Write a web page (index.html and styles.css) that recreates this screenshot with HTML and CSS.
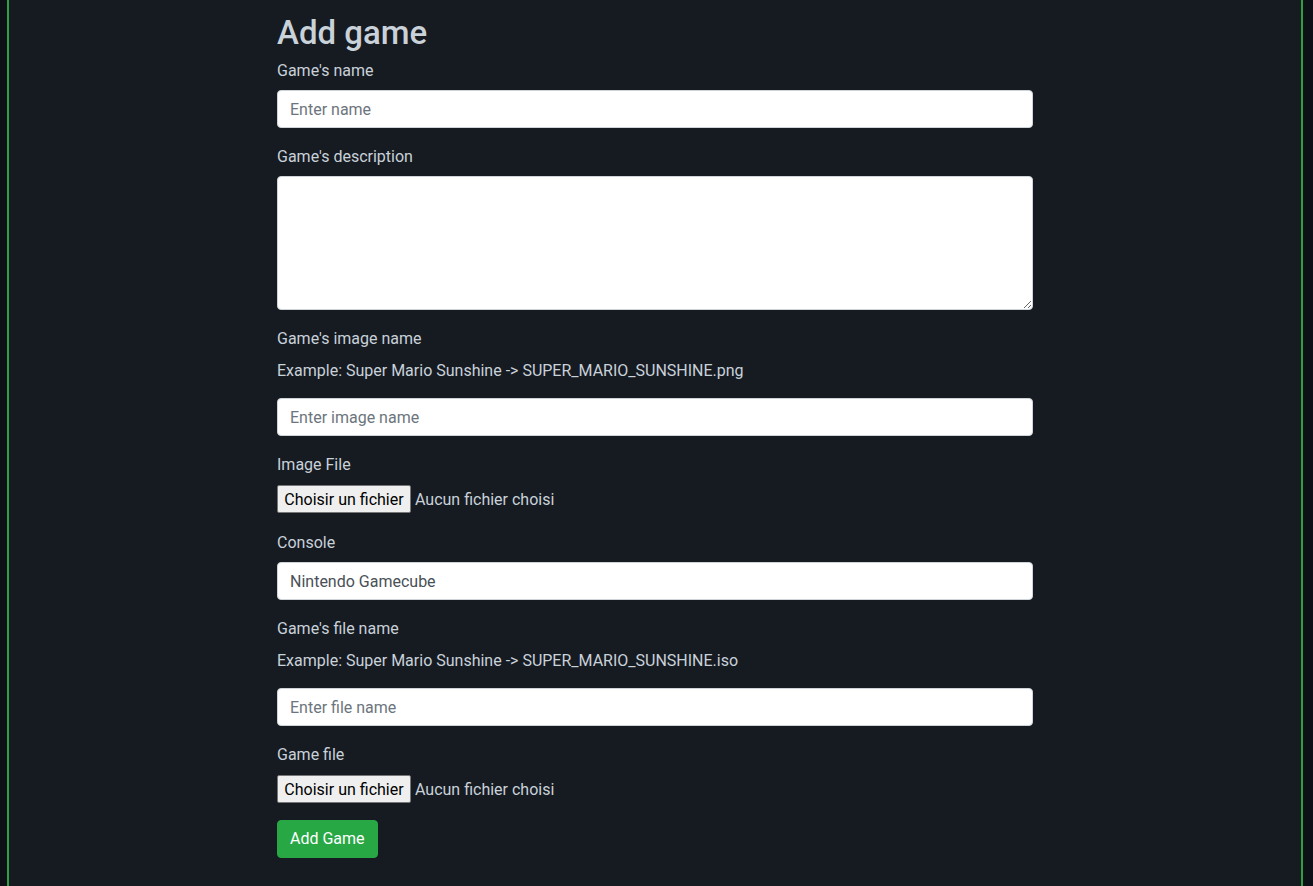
FILE: index.html
```html
<!DOCTYPE html>
<html lang="en">
<head>
<meta charset="utf-8">
<title>Add game</title>
<link rel="stylesheet" href="styles.css">
</head>
<body>
<div class="frame">
  <main class="container">
    <h2 class="title">Add game</h2>
    <form class="form">
      <div class="form-group">
        <label class="label" for="name">Game's name</label>
        <input class="form-control" id="name" type="text" placeholder="Enter name">
      </div>
      <div class="form-group">
        <label class="label" for="desc">Game's description</label>
        <textarea class="form-control textarea" id="desc" rows="5"></textarea>
      </div>
      <div class="form-group">
        <label class="label" for="img">Game's image name</label>
        <p class="hint">Example: Super Mario Sunshine -&gt; SUPER_MARIO_SUNSHINE.png</p>
        <input class="form-control" id="img" type="text" placeholder="Enter image name">
      </div>
      <div class="form-group">
        <label class="label">Image File</label>
        <div class="file">
          <span class="file-btn">Choisir un fichier</span>
          <span class="file-text">Aucun fichier choisi</span>
        </div>
      </div>
      <div class="form-group">
        <label class="label" for="console">Console</label>
        <input class="form-control value" id="console" type="text" value="Nintendo Gamecube">
      </div>
      <div class="form-group">
        <label class="label" for="file">Game's file name</label>
        <p class="hint">Example: Super Mario Sunshine -&gt; SUPER_MARIO_SUNSHINE.iso</p>
        <input class="form-control" id="file" type="text" placeholder="Enter file name">
      </div>
      <div class="form-group">
        <label class="label">Game file</label>
        <div class="file">
          <span class="file-btn">Choisir un fichier</span>
          <span class="file-text">Aucun fichier choisi</span>
        </div>
      </div>
      <button class="btn-success" type="button">Add Game</button>
    </form>
  </main>
</div>
</body>
</html>
```
FILE: styles.css
```css
html, body {
  margin: 0;
  padding: 0;
  height: 100%;
  background: #0d1117;
}

body {
  font-family: Roboto, "Noto Sans", sans-serif;
  font-size: 16px;
  line-height: 1.5;
  color: #c9d1d9;
}

.frame {
  margin-left: 7px;
  width: 1292px;
  min-height: 100%;
  background: #161b22;
  border-left: 2px solid #2ea043;
  border-right: 2px solid #2ea043;
  box-sizing: content-box;
}

.container {
  width: 756px;
  margin: 0 auto;
  padding-top: 14px;
  padding-bottom: 20px;
}

.title {
  margin: 0 0 6px;
  font-size: 33px;
  font-weight: 500;
  line-height: 38px;
  color: #c9d1d9;
}

.form-group {
  margin-bottom: 16px;
}

.label {
  display: block;
  margin-bottom: 8px;
  box-sizing: border-box;
  height: 24px;
  padding-top: 2px;
  line-height: 22px;
}

.hint {
  margin: 0 0 16px;
  box-sizing: border-box;
  height: 24px;
  padding-top: 2px;
  line-height: 22px;
}

.form-control {
  display: block;
  box-sizing: border-box;
  width: 100%;
  height: 38px;
  padding: 6px 12px;
  font-family: inherit;
  font-size: 16px;
  line-height: 1.5;
  color: #495057;
  background: #fff;
  border: 1px solid #ced4da;
  border-radius: 4px;
  margin: 0;
}

.form-control::placeholder {
  color: #6c757d;
  opacity: 1;
}

.textarea {
  height: 134px;
  resize: vertical;
}

.file {
  display: flex;
  align-items: center;
  height: 30px;
  gap: 4px;
}

.file-btn {
  display: inline-flex;
  align-items: center;
  box-sizing: border-box;
  height: 28px;
  width: 134px;
  justify-content: center;
  background: #efefef;
  border: 1px solid #767676;
  border-radius: 2px;
  color: #000;
  font-size: 16px;
  padding-top: 1px;
  white-space: nowrap;
}

.file-text {
  color: #c9d1d9;
  padding-top: 1px;
  white-space: nowrap;
}

.btn-success {
  display: block;
  box-sizing: border-box;
  height: 38px;
  padding: 6px 12px;
  font-family: inherit;
  font-size: 16px;
  line-height: 1.5;
  white-space: nowrap;
  color: #fff;
  background: #28a745;
  border: 1px solid #28a745;
  border-radius: 4px;
}
```
